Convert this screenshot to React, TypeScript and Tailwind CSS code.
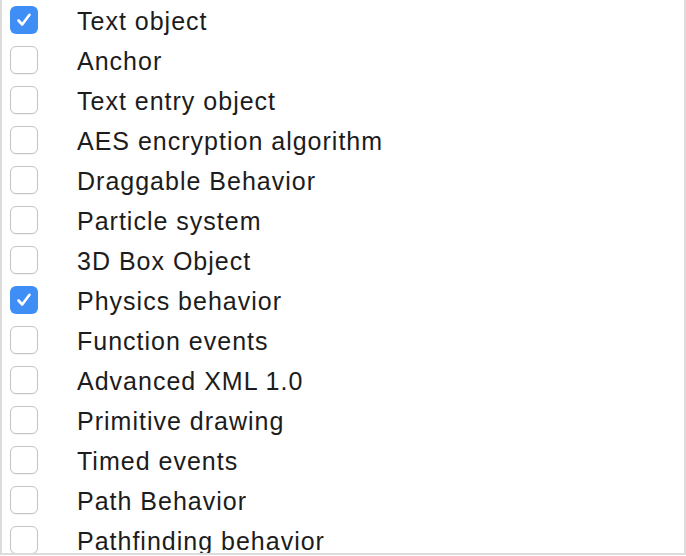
import { useState } from 'react';

const items = [
	{ name: 'Text object', checked: true },
	{ name: 'Anchor', checked: false },
	{ name: 'Text entry object', checked: false },
	{ name: 'AES encryption algorithm', checked: false },
	{ name: 'Draggable Behavior', checked: false },
	{ name: 'Particle system', checked: false },
	{ name: '3D Box Object', checked: false },
	{ name: 'Physics behavior', checked: true },
	{ name: 'Function events', checked: false },
	{ name: 'Advanced XML 1.0', checked: false },
	{ name: 'Primitive drawing', checked: false },
	{ name: 'Timed events', checked: false },
	{ name: 'Path Behavior', checked: false },
	{ name: 'Pathfinding behavior', checked: false },
];

export default function App() {
	const [list, setList] = useState(items);

	const toggle = (i: number) =>
		setList((l) => l.map((it, j) => (j === i ? { ...it, checked: !it.checked } : it)));

	return (
		<div className="w-[686px] h-[556px] bg-white">
			<div className="h-[555px] overflow-hidden border-l-2 border-r-2 border-b-2 border-[#dcdcdc] font-['Liberation_Sans',Arial,sans-serif] text-[25px] tracking-[1px] text-[#1c1c1c]">
				{list.map((it, i) => (
					<label
						key={it.name}
						className="flex items-center h-10 pl-2 cursor-default select-none"
						onClick={() => toggle(i)}
					>
						{it.checked ? (
							<span className="flex items-center justify-center w-7 h-7 rounded-md bg-[#3f8ef5]">
								<svg width="18" height="18" viewBox="0 0 18 18" fill="none">
									<path
										d="M3.5 9.5 L7.2 13.5 L14.5 3.8"
										stroke="white"
										strokeWidth="2.6"
										strokeLinecap="round"
										strokeLinejoin="round"
									/>
								</svg>
							</span>
						) : (
							<span className="block w-7 h-7 rounded-md bg-white border border-[#c4c4c4] shadow-[0_1px_1px_rgba(0,0,0,0.06)]" />
						)}
						<span className="ml-[39px] leading-none pt-[2px]">{it.name}</span>
					</label>
				))}
			</div>
		</div>
	);
}
